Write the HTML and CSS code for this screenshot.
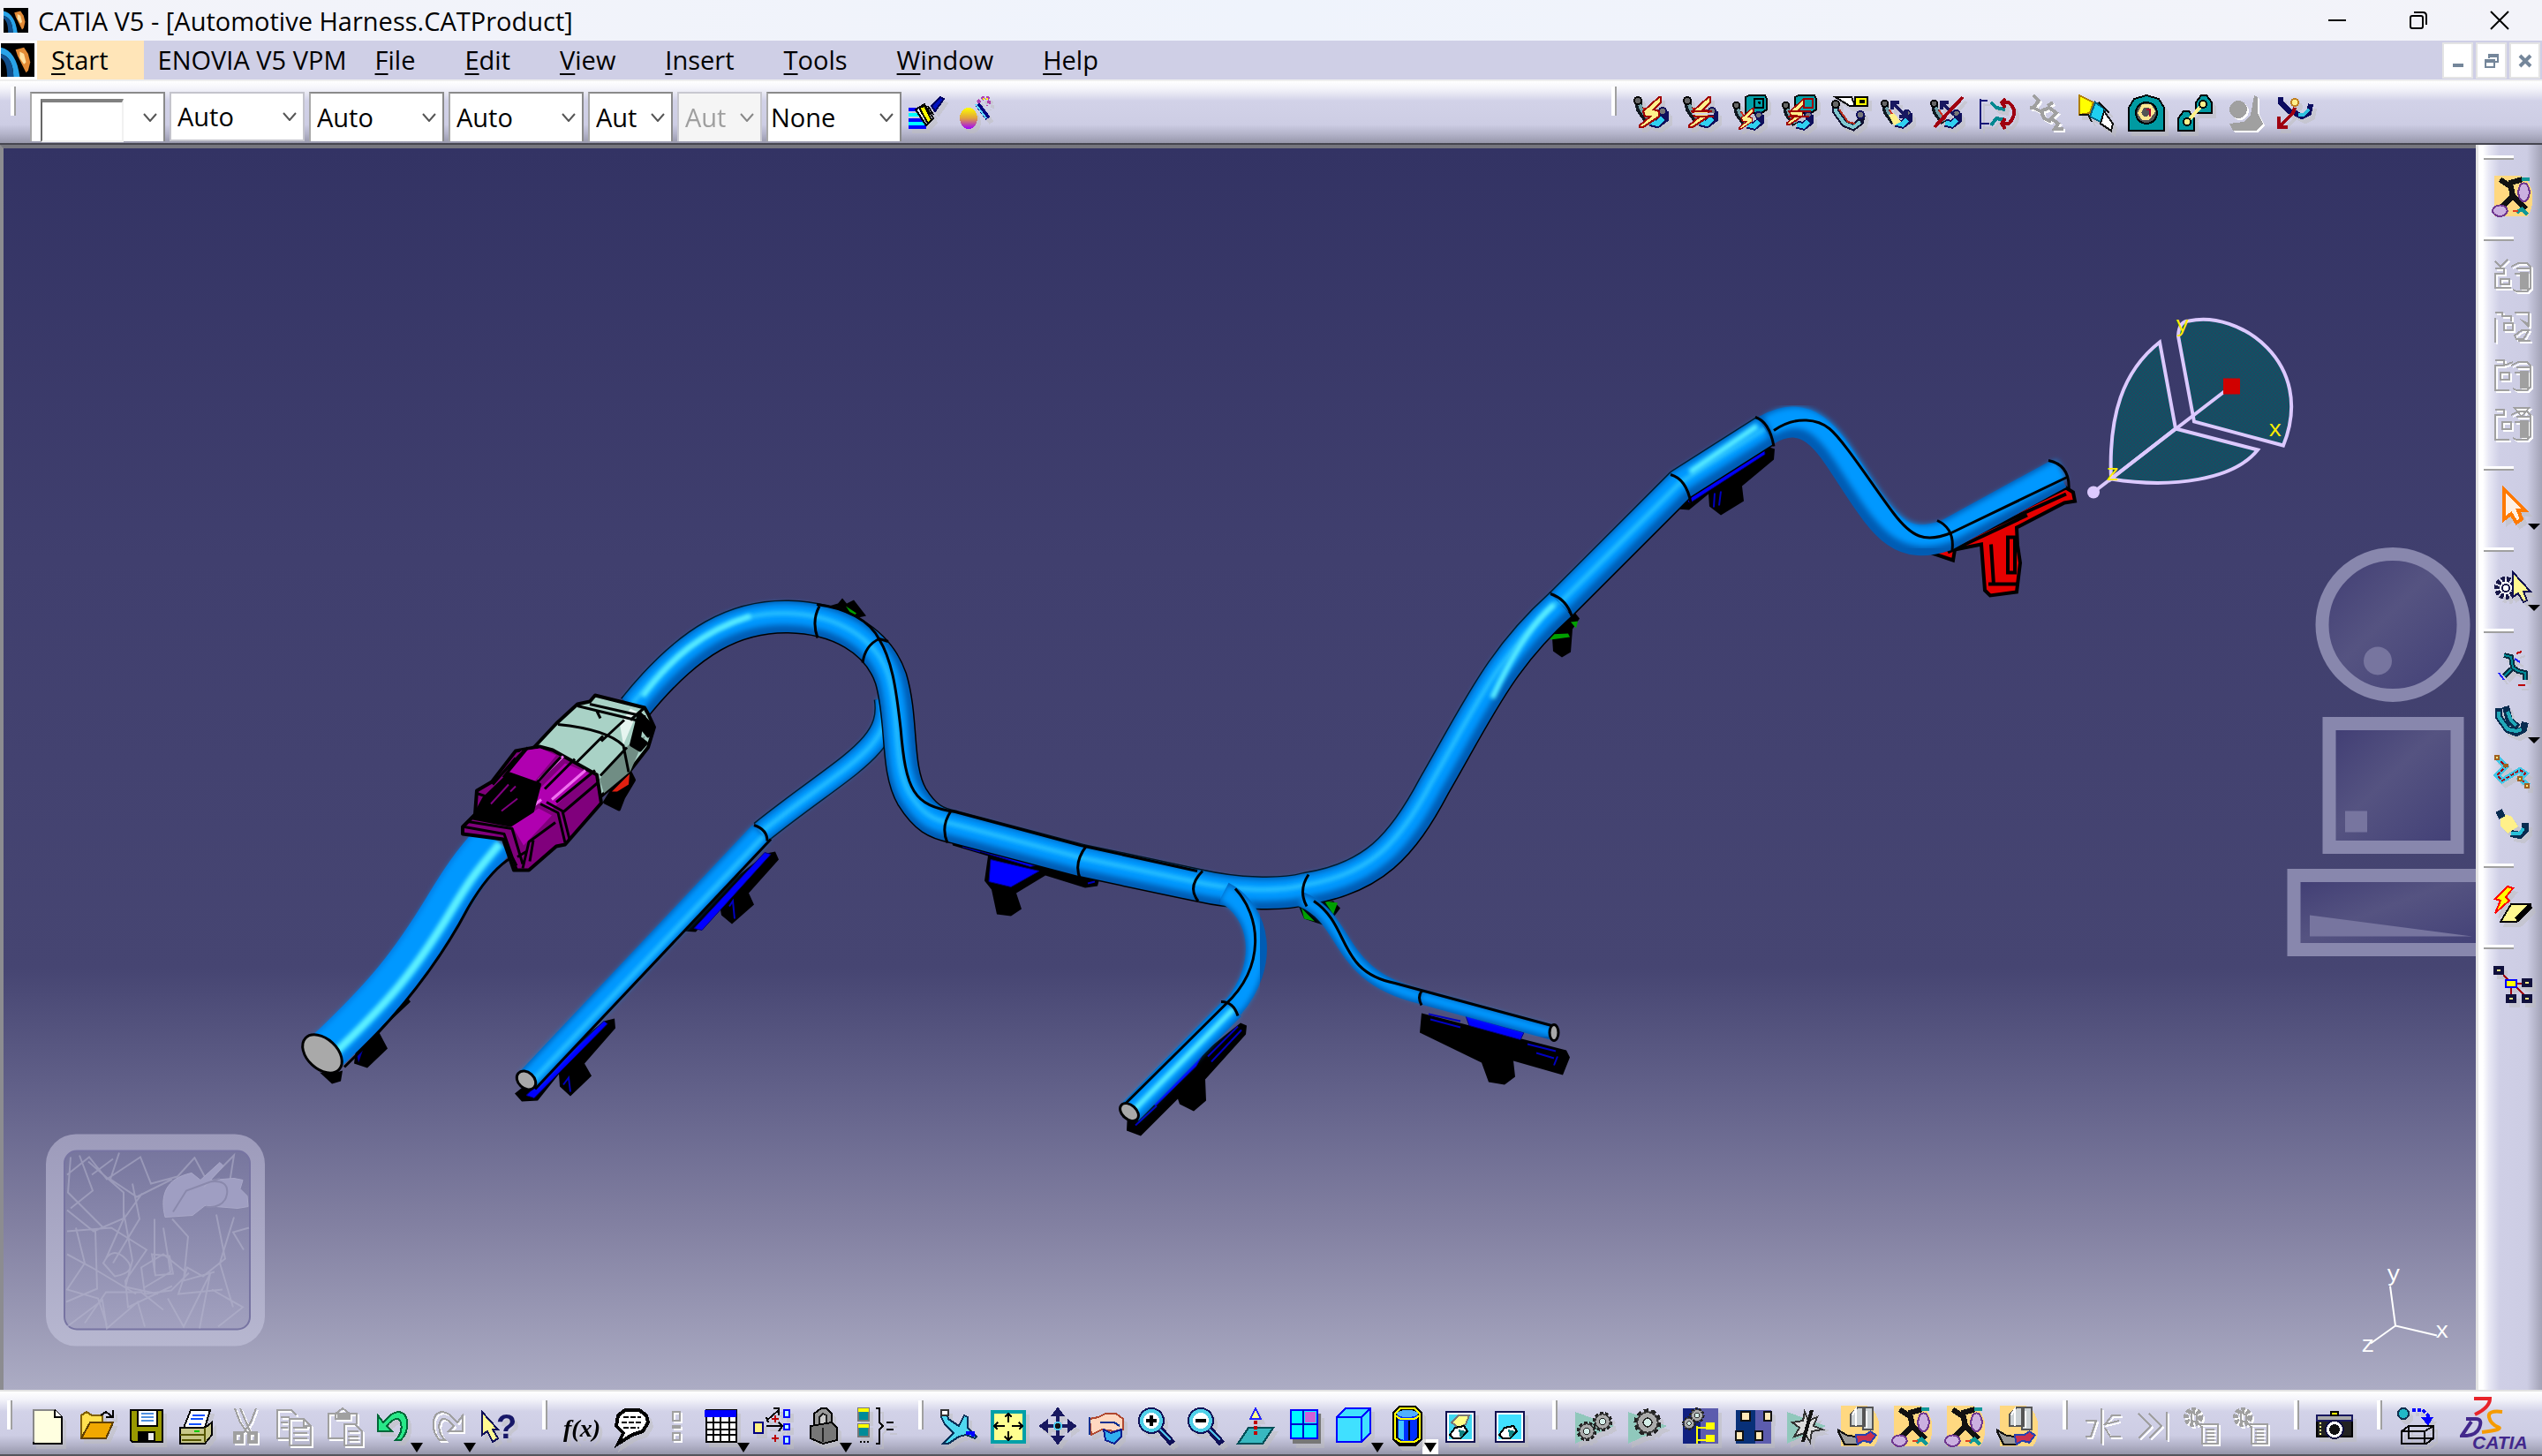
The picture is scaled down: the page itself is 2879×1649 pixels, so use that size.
FILE: index.html
```html
<!DOCTYPE html>
<html lang="en">
<head>
<meta charset="utf-8">
<title>CATIA V5 - [Automotive Harness.CATProduct]</title>
<link rel="stylesheet" href="styles.css">
</head>
<body>
<svg class="defs" aria-hidden="true">
  <defs>
    <symbol id="globe" viewBox="0 0 16 16"><rect width="16" height="16" fill="#000"/><path d="M0 2C5 3 8 8 9 16H6C6 10 4 6 0 5z" fill="#29a3e8"/><path d="M0 5c4 1 6 5 6 11H3C3 11 2 8 0 7z" fill="#124f8c"/><path d="M7 3l4-1 2 3 1 4-1 4-1 1-2-4-2-4z" fill="#e28a35"/><path d="M9 4l2 1 1 4-1 1-2-3z" fill="#ffe0a0"/></symbol>
    <symbol id="bundle" viewBox="0 0 22 22"><path d="M3 4l1 5 5 7" fill="none" stroke="#101820" stroke-width="4"/><path d="M4 6l1 3 4 6" fill="none" stroke="#6fa0a8" stroke-width="2"/><path d="M6 8l4 6" stroke="#d03020"/><path d="M10 16l4 1 4-3 0-4" fill="none" stroke="#10105c" stroke-width="5"/><path d="M10 16l4 1 3-3" fill="none" stroke="#30d0f0" stroke-width="3"/><circle cx="3" cy="4" r="2" fill="#666" stroke="#000"/><circle cx="17" cy="10" r="2" fill="#777" stroke="#10105c"/></symbol>
    <symbol id="bolt" viewBox="0 0 22 22"><path d="M15 2L6 10l1 3h3l-6 5v1h2l9-6v-3l-3-1 4-4V2z" fill="#fff08a" stroke="#a00000"/></symbol>
    <symbol id="harness" viewBox="0 0 24 24"><path d="M2 1h14c7 2 9 15 4 22H2z" fill="#ffd880"/><path d="M5 3l6 4 1 5-6 6M12 12l7 7M10 5l7-2" fill="none" stroke="#111" stroke-width="3"/><ellipse cx="18" cy="10" rx="3" ry="5" fill="#cbb0e0" stroke="#703890"/><ellipse cx="5" cy="20" rx="4" ry="3" fill="#cbb0e0" stroke="#703890"/><path d="M14 21l3-2 3 3M17 3h4" fill="none" stroke="#109898" stroke-width="2"/><path d="M12 20h3" stroke="#e04020"/></symbol>
    <symbol id="assembly" viewBox="0 0 24 24"><path d="M2 1h14c7 2 9 15 4 22H2z" fill="#ffd880"/><path d="M7 6l4-4h4v10H7zM14 2h5v12h-5z" fill="#ccd2d5" stroke="#555"/><path d="M8 6l2-3v9M16 4v9" stroke="#fff" fill="none"/><path d="M0 14l5 3 6 1v4H4z" fill="#999" stroke="#111"/><path d="M10 17h5l3-2 3 2-3 4-4-1-3 2z" fill="#c83050" stroke="#2840b0"/></symbol>
    <symbol id="cyl" viewBox="0 0 22 22"><path d="M10 5l4-2h5l2 2v12l-2 2h-6l-2-1M13 6h8M12 9h5" fill="none"/><path d="M15 8h5v10h-5z" class="solid"/></symbol>
    <symbol id="gear" viewBox="0 0 22 22"><circle cx="11" cy="11" r="8" fill="#888" stroke="#222" stroke-width="3" stroke-dasharray="3 2"/><circle cx="11" cy="11" r="7" fill="#aaa" stroke="#333"/><circle cx="11" cy="11" r="3" fill="#d4eee8" stroke="#222"/></symbol>
    <symbol id="gearlist" viewBox="0 0 22 22"><circle cx="6" cy="6" r="4" fill="none" stroke-width="3" stroke-dasharray="2 1"/><path d="M5 3l3 2v4L5 8zM8 8l3 4M9 10h11v11H11V11" fill="none"/><path d="M13 13h5M13 15h5M13 17h5M13 19h5" fill="none"/></symbol>
    <linearGradient id="panel" x1="0" y1="0" x2="1" y2="1"><stop offset="0" stop-color="#3f3c73"/><stop offset=".45" stop-color="#555381"/><stop offset="1" stop-color="#413f76"/></linearGradient>
    <linearGradient id="plate" x1="0" y1="0" x2="0" y2="1"><stop offset="0" stop-color="#9d9bbb"/><stop offset="1" stop-color="#b7b7d0"/></linearGradient>
    <linearGradient id="glass" x1="0" y1="0" x2="0" y2="1"><stop offset="0" stop-color="#77769e"/><stop offset="1" stop-color="#a2a1bf"/></linearGradient>
    <linearGradient id="ball" x1="0" y1="0" x2="0" y2="1"><stop offset="0" stop-color="#ffff00"/><stop offset=".5" stop-color="#e0a040"/><stop offset="1" stop-color="#a000ff"/></linearGradient>
    <pattern id="mesh" width="4" height="4" patternUnits="userSpaceOnUse"><rect width="4" height="4" fill="#0a5666"/><path d="M0 0h2v2H0zM2 2h2v2H2z" fill="#26425f"/></pattern>
    <filter id="soft"><feGaussianBlur stdDeviation="3"/></filter>
    <filter id="glow"><feGaussianBlur stdDeviation="2"/></filter>
    <path id="tubeA" d="M368 1192C436 1128 465 1092 505 1026C530 984 540 974 560 950"/>
    <path id="tubeB" d="M718 802C782 722 835 697 893 698C948 699 994 724 1009 768C1023 815 1014 870 1033 902C1048 926 1060 932 1080 936L1224 974L1356 1002C1400 1012 1450 1014 1480 1006C1555 994 1588 958 1624 890C1676 800 1700 745 1768 684"/>
    <path id="tubeC" d="M1003 790C1012 846 958 865 862 942"/>
    <path id="tubeC2" d="M862 943L598 1223"/>
    <path id="tubeD" d="M1386 1010C1428 1032 1438 1092 1396 1141"/>
    <path id="tubeD2" d="M1396 1141L1280 1259"/>
    <path id="tubeE" d="M1474 1018C1530 1042 1510 1104 1609 1128"/>
    <path id="tubeE2" d="M1609 1128L1759 1169"/>
    <path id="tubeF" d="M1768 684L1904 548L2000 487"/>
    <path id="tubeG" d="M2000 487C2050 458 2073 502 2098 540C2138 602 2155 622 2204 606L2332 536"/>
  </defs>
</svg>

<header class="titlebar">
  <svg class="app-icon"><use href="#globe"/></svg>
  <h1>CATIA V5 - [Automotive Harness.CATProduct]</h1>
  <div class="window-buttons">
    <button aria-label="Minimize"><svg viewBox="0 0 20 20"><path d="M0 10h20"/></svg></button>
    <button aria-label="Restore"><svg viewBox="0 0 20 20"><rect x="1" y="5" width="14" height="14" rx="2"/><path d="M5 1h10q4 0 4 4v10"/></svg></button>
    <button aria-label="Close"><svg viewBox="0 0 20 20"><path d="M0 0l20 20M20 0L0 20"/></svg></button>
  </div>
</header>

<nav class="menubar">
  <svg class="doc-icon"><use href="#globe"/></svg>
  <button class="active"><u>S</u>tart</button>
  <button class="tight">ENOVIA V5 VPM</button>
  <button><u>F</u>ile</button>
  <button><u>E</u>dit</button>
  <button><u>V</u>iew</button>
  <button><u>I</u>nsert</button>
  <button><u>T</u>ools</button>
  <button><u>W</u>indow</button>
  <button><u>H</u>elp</button>
  <div class="doc-buttons">
    <button aria-label="Minimize document"><svg viewBox="0 0 16 16"><path d="M2 13h12" stroke-width="4"/></svg></button>
    <button aria-label="Restore document"><svg viewBox="0 0 16 16"><path d="M5 5V1h10v8h-4M5 3h10M1 7h10v8H1zM1 9h10" stroke-width="2"/></svg></button>
    <button aria-label="Close document"><svg viewBox="0 0 16 16"><path d="M2 2l12 12M14 2L2 14" stroke-width="4"/></svg></button>
  </div>
</nav>

<div class="toolbar top" role="toolbar" aria-label="Graphic properties and electrical bundle">
  <i class="grip"></i>
  <div class="combos">
    <span class="combo swatch"><select aria-label="Fill colour"><option></option></select></span>
    <span class="combo flat"><select aria-label="Transparency"><option>Auto</option></select></span>
    <span class="combo"><select aria-label="Line weight"><option>Auto</option></select></span>
    <span class="combo"><select aria-label="Line type"><option>Auto</option></select></span>
    <span class="combo small"><select aria-label="Point symbol"><option>Aut</option></select></span>
    <span class="combo small off"><select aria-label="Rendering style" disabled><option>Aut</option></select></span>
    <span class="combo"><select aria-label="Layer"><option>None</option></select></span>
  </div>
  <button class="tool" aria-label="Painter"><svg viewBox="0 0 22 22"><path d="M0 9h9M0 15h12" stroke="#00f" stroke-width="2"/><path d="M0 12h11M0 17h10" stroke="#0ff" stroke-width="2"/><path d="M0 19h10" stroke="#00f" stroke-width="2"/><path d="M4 9l5-3 5 8-4 4z" fill="#fff" stroke="#000"/><path d="M6 8l3-1 4 8-2 2z" fill="#ff0" stroke="#000"/><path d="M11 7l3 5" stroke="#000"/><path d="M13 7l5-5 2 1-5 7z" fill="#0010c0" stroke="#000060"/></svg></button>
  <button class="tool" aria-label="Wizard"><svg viewBox="0 0 22 22"><ellipse cx="6" cy="14" rx="5" ry="6" fill="url(#ball)"/><path d="M11 6l6 8" stroke="#000080" stroke-width="3"/><path d="M10 6l6 8" stroke="#60d8ff"/><path d="M11 5l4-3 3 1-1 4" fill="none" stroke="#b040b0" stroke-dasharray="2 1" stroke-width="2"/><path d="M14 3h4" stroke="#ff0" stroke-dasharray="1 1"/></svg></button>
  <div class="right-tools">
    <i class="grip"></i>
    <button class="tool" aria-label="Create bundle"><svg viewBox="0 0 22 22"><use href="#bundle"/><use href="#bolt"/></svg></button>
    <button class="tool" aria-label="Modify bundle"><svg viewBox="0 0 22 22"><use href="#bundle"/><use href="#bolt"/><path d="M5 10h12M7 13h11" stroke="#a00000"/><path d="M6 11h12v1H6z" fill="#cfcfe6"/></svg></button>
    <button class="tool" aria-label="Create protected bundle"><svg viewBox="0 0 22 22"><path d="M8 2l2-1h9l1 2v6l-3 2H8z" fill="#00a0a8" stroke="#000"/><path d="M13 3h5v5h-5zM15 5h1v1" fill="none" stroke="#000"/><use href="#bundle" y="3" height="20" width="20"/><use href="#bolt" x="1" y="7" height="15" width="16"/></svg></button>
    <button class="tool" aria-label="Modify protected bundle"><svg viewBox="0 0 22 22"><path d="M8 2l2-1h9l1 2v6l-3 2H8z" fill="#00a0a8" stroke="#000"/><path d="M13 3h5v5h-5z" fill="none" stroke="#a00000"/><use href="#bundle" y="3" height="20" width="20"/><use href="#bolt" y="1" height="20" width="18"/><path d="M4 10h13M4 13h12" stroke="#a00000"/></svg></button>
    <button class="tool" aria-label="Measure bundle"><svg viewBox="0 0 22 22"><path d="M3 6v4l5 7 5 2 4-3 1-4" fill="none" stroke="#101030" stroke-width="4"/><path d="M3 6v4l5 7 5 2 4-3" fill="none" stroke="#7fc8d0" stroke-width="2"/><path d="M5 9l5 7 4 1" fill="none" stroke="#b83020"/><circle cx="3" cy="6" r="2" fill="#666" stroke="#000"/><circle cx="17" cy="12" r="2" fill="#777" stroke="#10105c"/><path d="M3 2h9l2 5-3 0z" fill="#fff" stroke="#000"/><path d="M14 2h7v5h-7z" fill="#ff0" stroke="#000" stroke-width="1"/><path d="M17 4h2v1h-2z" stroke="#000"/></svg></button>
    <button class="tool" aria-label="Flatten"><svg viewBox="0 0 22 22"><use href="#bundle" y="2" height="20" width="20"/><path d="M5 12l3-1 4 5-4 2z" fill="#fff08a"/><path d="M8 6l6 6M7 9V5h4M15 9v4h-4" fill="none" stroke="#181860" stroke-width="2"/></svg></button>
    <button class="tool" aria-label="Remove link"><svg viewBox="0 0 22 22"><use href="#bundle" y="2" height="20" width="20"/><path d="M8 6l6 6M7 9V5h4" fill="none" stroke="#181860" stroke-width="2"/><path d="M19 2L3 19" stroke="#a00010" stroke-width="2"/></svg></button>
    <button class="tool" aria-label="Swap"><svg viewBox="0 0 22 22"><path d="M1 3v17M1 4h4M1 17h5" fill="none" stroke="#181878" stroke-width="1"/><path d="M7 5l3 3 5 1M7 18l3-4 5 1" fill="none" stroke="#008890" stroke-width="2"/><path d="M13 5h4c4 3 4 8 0 12h-4M15 3l-2 2 2 3M15 14l-2 3 2 3" fill="none" stroke="#a00010" stroke-width="2"/></svg></button>
    <button class="tool off" disabled aria-label="Route"><svg viewBox="0 0 22 22"><path d="M3 1l3 3-3 4 4 2 5-2 4 3-3 3 4 3-2 3h5M7 9l2 5 4 2M1 8h3M11 7l3-2" fill="none" stroke-width="2"/></svg></button>
    <button class="tool" aria-label="Connector"><svg viewBox="0 0 22 22"><path d="M1 1l8 4-2 6-6 1z" fill="#ff0" stroke="#b08000"/><path d="M10 5l6 4-3 7-6-3z" fill="#20d0f0" stroke="#006080"/><path d="M15 10l5 7-1 4-6-4z" fill="#fff" stroke="#111"/><path d="M1 12h5l2 4M12 5l6 6" stroke="#111" fill="none"/></svg></button>
    <button class="tool" aria-label="Support"><svg viewBox="0 0 22 22"><path d="M1 21V8l3-5 7-2 7 2 3 5v13z" fill="#009aa2" stroke="#000"/><circle cx="11" cy="11" r="6" fill="#555" stroke="#000"/><path d="M9 7h4l2 3-3 4H9L7 11z" fill="none" stroke="#ffe890" stroke-width="2"/><path d="M11 9h2v4" fill="none" stroke="#b00030"/></svg></button>
    <button class="tool" aria-label="Link supports"><svg viewBox="0 0 22 22"><path d="M11 11V5l3-4h3l3 4v6zM1 21v-7l3-4h3l3 4v7z" fill="#009aa2" stroke="#000"/><path d="M6 16L15 6" stroke="#fff08a" stroke-width="2"/><circle cx="15" cy="6" r="2" fill="#fff08a" stroke="#000"/><circle cx="6" cy="16" r="2" fill="#fff08a" stroke="#000"/></svg></button>
    <button class="tool off" disabled aria-label="Clamp"><svg viewBox="0 0 22 22"><g class="solid"><circle cx="7" cy="9" r="5"/><path d="M16 1l2 1v9l3 6-4 4H4l-2-4 8-1 4-4z"/></g></svg></button>
    <button class="tool" aria-label="Follow curve"><svg viewBox="0 0 22 22"><path d="M3 2v3l5 5 4 1M20 6l-1 5-4 2-4-2" fill="none" stroke="#0b0b60" stroke-width="3"/><path d="M13 12l3 0 3-3" fill="none" stroke="#30c0e0" stroke-width="2"/><circle cx="11" cy="5" r="2" fill="#fff08a" stroke="#c08020"/><path d="M11 8l-1 3-7 7M2 13v6h5" fill="none" stroke="#a00010" stroke-width="2"/></svg></button>
  </div>
</div>

<main class="work">
  <section class="viewport" aria-label="3D view">
    <svg class="scene" viewBox="4 168 2800 1405" preserveAspectRatio="xMidYMid meet">
      <!-- mounting clips under the harness -->
      <g class="clip">
        <path class="k" d="M462 1130l3 4-36 34 10 19-23 22-15-5 2-16-20 16-3 14-14-3 30-40z"/><path d="M404 1192l8-6-6 17z" fill="#0000a8"/>
        <path class="k" d="M868 966l10-2 4 9-34 38 6 13-25 22-12-10-2-12-27 31-16-1-6-8z"/><path class="b" d="M866 965l7 2-78 86-9-2z"/><path class="r" d="M826 1026l4-6 2 20"/>
        <path class="k" d="M684 1156l12-3 1 11-35 40 8 14-24 23-12-11-1-14-24 30-18 1-8-9z"/><path class="b" d="M684 1156l4 3-83 84-9-3z"/><path class="r" d="M638 1228l6-8 2 16"/>
        <path class="k" d="M1078 952l168 40-3 11-14 2-45-14-33 20 6 18-12 8-16-2-6-28-8-10 4-28-40-12z"/><path class="b" d="M1122 973l55 13-32 18-25-6zM1105 958l70 21-8 2-60-18z"/><path class="r" d="M1232 1000l8-2M1090 958l20 6"/>
        <path class="k" d="M1405 1158l7 3-1 10-46 51 1 24-14 12-16-8-2-6-42 42-16-6 1-20z"/><path class="b" d="M1364 1190l-9 17-46 45-5-4z"/><path class="r" d="M1402 1162l-34 34M1406 1166l-34 36M1310 1252l-24 22M1300 1248l-20 20"/>
        <path class="k" d="M1610 1147l164 42 4 8-8 20-56-16 2 18-12 9-18-3-8-22-70-34z"/><path class="b" d="M1660 1150l66 19-4 8-58-16z"/><path class="r" d="M1618 1148l36 8M1620 1154l34 9M1730 1182l32 8M1764 1196l-4 10M1740 1192l20 6"/>
        <path class="k" d="M1998 504l12 4-1 12-36 30 2 17-26 16-13-10-1-14-22 18-13-1 2-14z"/><path class="b" d="M1998 508l1 6-85 55-4-3z"/><path class="r" d="M1942 558l-1 16M1949 556l-2 16"/>
        <path d="M2188 626l152-74 8 5 2 10-12 2-54 28 1 20 3 20-4 33-30 4-6-6-4-52-30 6-2 12z" fill="#e60000" stroke="#000" stroke-width="4"/><path d="M2200 622l140-63M2274 608l8 0v40l-8 0zM2255 616l3 46M2252 661h34M2206 625l90-42" fill="none" stroke="#000" stroke-width="4"/>
        <path class="k" d="M1755 705l26-15 8 10-8 12-2 26-10 6-10-7-1-15-8-6z"/><path class="g" d="M1754 718l22-1 2 4-22 3zM1779 704l8-1-2 8z"/>
        <path class="k" d="M1470 1024l40-4 8 8-9 12-8 8-24-8z"/><path class="g" d="M1474 1028l15 15-12-3zM1500 1020l15 2-5 13z"/>
        <path class="k" d="M935 687l14-4 5-6 5 6 8-4 14 18-18 4z"/><path class="g" d="M958 686l12 8-4 4z"/>
      </g>
      <!-- cable segments: outline, shaded side, body, highlight -->
      <g class="tube w24"><use class="o" href="#tubeC"/><use class="d" href="#tubeC"/><use class="m" href="#tubeC"/><use class="h" href="#tubeC"/></g>
      <g class="tube w28"><use class="d" href="#tubeC2"/><use class="m" href="#tubeC2"/><use class="h" href="#tubeC2" transform="translate(3 3)"/></g>
      <g class="tube w34"><use class="o" href="#tubeB"/><use class="d" href="#tubeB"/><use class="m" href="#tubeB" transform="translate(-2 -3)"/><use class="h" href="#tubeB" transform="translate(-3 -4)"/></g>
      <g class="tube w34"><use class="o" href="#tubeF"/><use class="d" href="#tubeF"/><use class="m" href="#tubeF" transform="translate(-2 -3)"/><use class="h" href="#tubeF" transform="translate(-1 -2)"/></g>
      <g class="tube w34"><use class="d" href="#tubeG"/><use class="m" href="#tubeG" transform="translate(3 -5)"/></g>
      <g class="tube w24"><use class="d" href="#tubeD"/><use class="m" href="#tubeD"/></g>
      <g class="tube w28 bright"><use class="d" href="#tubeD2"/><use class="m" href="#tubeD2"/><use class="h" href="#tubeD2" transform="translate(1 1)"/></g>
      <g class="tube w18"><use class="d" href="#tubeE"/><use class="m" href="#tubeE"/><use class="d" href="#tubeE2"/><use class="m" href="#tubeE2"/></g>
      <g class="tube w46 bright"><use class="d" href="#tubeA"/><use class="m" href="#tubeA" transform="translate(-2 -2)"/><use class="h" href="#tubeA" transform="translate(6 5)"/></g>
      <g class="tube bright"><path class="h" d="M728 788C760 745 795 715 850 697M1690 790C1712 742 1735 706 1760 684M1914 534L1990 482"/></g>
      <g class="line">
        <path d="M390 1208C455 1146 500 1085 530 1028Q555 985 579 971"/>
        <path d="M873 950L606 1233"/>
        <path d="M925 684C958 688 985 702 996 724C1012 750 1016 790 1020 824C1026 895 1034 912 1082 919L1224 957L1356 986"/>
        <path d="M928 686q-9 17-2 36M977 750q3-20 19-27l10 3M854 934q15 5 15 18M1077 918q-12 18-4 36M1230 958q-15 20-6 38M1362 986q-18 18-5 34M1482 990q-12 18-2 36"/>
        <path d="M1756 672q18 6 24 25M1892 537q18 5 23 32M1988 472q16 5 21 33M2194 589q20 9 17 34M2320 521q25 5 23 34"/>
        <path d="M2009 487C2035 469 2060 475 2072 485C2088 498 2120 548 2144 580C2165 608 2180 615 2210 603L2341 540"/>
        <path d="M1399 1006C1428 1037 1434 1094 1388 1137L1271 1253M1383 1134q14 0 19 16"/>
        <path d="M1488 1020C1530 1048 1514 1100 1580 1113L1761 1162M1610 1122q-5 7 0 16"/>
      </g>
      <g fill="#a9a9a9" stroke="#000" stroke-width="3"><ellipse cx="365" cy="1193" rx="26" ry="17" transform="rotate(43 365 1193)"/><ellipse cx="596" cy="1223" rx="12" ry="9" transform="rotate(42 596 1223)"/><ellipse cx="1279" cy="1259" rx="12" ry="8" transform="rotate(42 1279 1259)"/><ellipse cx="1760" cy="1169" rx="5" ry="9"/></g>
      <path d="M362 1214l12 2 14-4-2 12-10 3z"/>
      <!-- two part connector -->
      <g stroke="#000" stroke-width="4" stroke-linejoin="round">
        <path d="M696 890l18-15 4 8-12 20-5 13-16-8z" fill="#000"/><path d="M713 876l-1 12-13 8-6 0z" fill="#e02010" stroke="none"/>
        <path d="M674 787l56 14 4 7 7 15-7 23-21 27-32 28-80-51 29-31 24-22 14-3z" fill="#a9d2c6"/>
        <path d="M712 843l19-10-17 40-30 25-5-16z" fill="#708d84" stroke="none"/>
        <path d="M702 820l12-18 8 4-16 37z" fill="#e6f5f0" stroke="none"/>
        <path d="M668 797l62 14-2 14-8-10-66-16M632 820c40 4 62 12 74 24l6 30M707 815l-26 24M683 833l-32 32M710 846l-30 32M730 801l-16 14M676 805l4 8" fill="none" stroke-width="3"/><path d="M724 807l16 16-6 10-8-10-2 12 8 6-7 8-10-6z" fill="#000"/>
        <path d="M584 850l27-5 15 4 50 28 5 32-41 47-10 2-31 27h-17l-12-35-46-6v-8l14-14 2-27 17-10z" fill="#80007c"/>
        <path d="M590 850l22-3 18 8-25 30-32-6zM640 864l28 12-45 42-22-15zM580 935l30-20 15 8-32 34z" fill="#b000b0" stroke="none"/>
        <path d="M610 883l28-27M625 905l38-33M581 931l32-26" stroke="#f070f0" stroke-width="3"/>
        <path d="M577 876l34 12-8 30-25 16-42-8 12-22z" fill="#000"/>
        <path d="M563 882l30-32M570 880l28-34M558 888l26-30M607 887l28-30M617 893l34-34M630 908l44-36M637 920l40-34M612 910l20 10 8 34M619 908l18 10 8 32M540 898l18 6M526 936l45 8 14 40M530 930l50 8 12 40M592 983l7-30 30-22M586 970l10-6M575 960l10 20M600 975l4-24" fill="none" stroke-width="3"/>
        <path d="M556 910l20-22M578 896l6-6M568 918l18-14" stroke="#800080" stroke-width="2"/>
      </g>
      <!-- compass -->
      <g fill="url(#mesh)" stroke="#dcc9ff" stroke-width="4"><path d="M2485 477l-18-97q1-17 12-17C2535 350 2624 410 2586 504z"/><path d="M2446 387l18 98-73 57C2388 470 2404 420 2446 387z"/><path d="M2464 485l93 24C2530 543 2460 553 2391 542z"/><path d="M2371 557L2527 437"/></g>
      <circle cx="2371" cy="557" r="7" fill="#dcc9ff"/><rect x="2518" y="428" width="19" height="18" fill="#d00000"/>
      <g class="axis yellow"><text x="2464" y="375">y</text><text x="2569" y="493">x</text><text x="2385" y="543">z</text></g>
      <!-- view controls -->
      <g fill="url(#panel)" stroke="#8887ad" stroke-width="15"><circle cx="2710" cy="707" r="80"/><rect x="2638" y="819" width="145" height="140"/><path d="M2820 991H2598v84h222"/></g>
      <g fill="#77759f"><circle cx="2693" cy="748" r="16"/><path d="M2656 918h25v24h-25zM2616 1036v24h184z"/></g>
      <!-- inactive magnifier plate -->
      <rect x="52" y="1284" width="248" height="240" rx="34" fill="url(#plate)"/><rect x="73" y="1303" width="210" height="202" rx="14" fill="url(#glass)" stroke="#7774a2" stroke-width="2"/>
      <path class="cracks" d="M76 1330l25-20 20 25 38-25 12 30 30-8 20-22M90 1308l15 40-25 20M100 1315l40 35 0 30-20 45M76 1370l30 24 35-15 20-28M135 1305l-10 30 30 20 40-20M76 1394l50-4 40 25-24 35 3 30 50-24M86 1390l10 40-20 30 35 10 10 30M108 1394l2 65-35 15M140 1372l10 55-8 30 37 8M185 1390l8 50-30 18M175 1380l0 60M80 1310l-3 40 40 40M245 1375l10 50-25 20-18-10-10 30 50-5M265 1378l-16 52 15 50M282 1390l-18 5 12 20M190 1470l18 32 30-60-12 62M76 1502l40-30 5 32 35-30 8 28M240 1460l35 20-28 22M96 1498l24-35 40 0 25 20M195 1380l18 20-5 50 35-10M76 1420l28 15 50 30M104 1330l24-18M150 1340l8 40-30 50M220 1310l15 28 30-30-8 50M210 1440l-25-20-25 15 4 30 30-4 20-20M117 1430q10-20 25-5t-12 20zM172 1420l20 2 4 20-20 2z"/>
      <path d="M187 1378c-6-24 0-44 30-50l10 8 22-20 4 4-22 24 8-8 26-2 10 2-3 10 8 8 1 12-12 2-37-3-14 11z" fill="#9f9ec2" stroke="#a9a8c8"/><path d="M237 1338c14-2 22 2 20 14s-14 16-24 14M196 1372l15-24 38-14" fill="none" stroke="#8a89ac" stroke-width="2"/>
      <!-- reference axes -->
      <path d="M2707 1456l6 45 47 11M2713 1501l-28 20" fill="none" stroke="#fff" stroke-width="2"/>
      <g class="axis"><text x="2703" y="1450">y</text><text x="2758" y="1514">x</text><text x="2674" y="1530">z</text></g>
    </svg>
  </section>

  <aside class="sidebar" role="toolbar" aria-label="Workbench tools">
    <i class="bar"></i>
    <button class="tool big" aria-label="Workbench"><svg><use href="#harness"/></svg></button>
    <i class="bar"></i>
    <button class="tool off" disabled aria-label="Insert part"><svg viewBox="0 0 22 22"><use href="#cyl"/><path d="M1 2l3 3 4-4M1 6h5v3H1v8h9M4 12h5v3H4z" fill="none"/></svg></button>
    <button class="tool off" disabled aria-label="Replace part"><svg viewBox="0 0 22 22"><path d="M1 3h4v2h5v3M1 6v14M6 9h5v4H6zM12 3h8v8M12 16l4-3h4l-3 5h-4zM14 19h7" fill="none"/><path d="M14 6l6 3v3z" class="solid"/></svg></button>
    <button class="tool off" disabled aria-label="Insert assembly"><svg viewBox="0 0 22 22"><use href="#cyl"/><path d="M1 2h5v3H1v14h8M6 5l5-2M4 9h5v4H4z" fill="none"/></svg></button>
    <button class="tool off" disabled aria-label="Insert component"><svg viewBox="0 0 22 22"><use href="#cyl"/><path d="M1 2h5v3H1v14h8M5 9h5v4H5zM12 1h8l-4 5z" fill="none"/></svg></button>
    <i class="bar"></i>
    <button class="tool more" aria-label="Select"><svg viewBox="0 0 22 22"><path d="M6 1v17l4-3 3 5 3-2-2-5h4z" fill="#fff0e4" stroke="#ff7a00" stroke-width="2"/></svg></button>
    <i class="bar"></i>
    <button class="tool more" aria-label="Geometry selection"><svg viewBox="0 0 22 22"><circle cx="7" cy="11" r="5" fill="#fff" stroke="#181848" stroke-width="3" stroke-dasharray="2 1"/><circle cx="7" cy="11" r="2" fill="none" stroke="#181848"/><path d="M11 2v14l3-2 3 5 2-1-2-5h4z" fill="#fff890" stroke="#101050"/></svg></button>
    <i class="bar"></i>
    <div class="stack">
      <button class="tool" aria-label="Bundle segment"><svg viewBox="0 0 22 22"><path d="M6 3l4 1 1 6 3 2 4 1v4M10 11l-4 4" fill="none" stroke="#0a2c40" stroke-width="3"/><path d="M6 3l4 1 1 6 3 2 4 1v4M10 11l-4 4" fill="none" stroke="#008c98"/><path d="M3 13l3 4M12 5l3 2" stroke="#22f"/><path d="M13 2l3-1M14 20h4" stroke="#b00"/></svg></button>
      <button class="tool more" aria-label="Multi branchable"><svg viewBox="0 0 22 22"><path d="M3 4v5l5 7 5 2 4-2 1-4M7 3l2 8 5 4" fill="none" stroke="#082c50" stroke-width="4"/><path d="M3 6v3l5 7 5 1 3-1M8 6l2 5 3 3" fill="none" stroke="#20a8b8" stroke-width="2"/></svg></button>
      <button class="tool" aria-label="Spline"><svg viewBox="0 0 22 22"><path d="M2 3l5 5-5 5 3 3 10-6 3 2-3 3 5 4" fill="none" stroke="#40c8e8" stroke-width="3"/><path d="M2 3l5 5-5 5 3 3 10-6 3 2-3 3 5 4" fill="none" stroke="#a00010" stroke-dasharray="2 1"/><path d="M1 2h2v2H1zM6 7h2v1H6zM14 14h2v2h-2zM18 18h2v2h-2z" fill="#fff080" stroke="#a06020"/></svg></button>
      <button class="tool" aria-label="Attach bundle"><svg viewBox="0 0 22 22"><path d="M4 6l6 1 4 6-6 4-4-4z" fill="#fff08a"/><path d="M3 4l2 4M10 17l5 1 3-3v-4" fill="none" stroke="#082c50" stroke-width="4"/><path d="M10 17h5l2-3" fill="none" stroke="#28c0d8" stroke-width="2"/></svg></button>
    </div>
    <i class="bar"></i>
    <button class="tool" aria-label="Update"><svg viewBox="0 0 22 22"><path d="M8 1L1 8l3 1-3 7 8-7-2-2 4-5z" fill="#ff0" stroke="#f00"/><path d="M10 11h11v2l-8 8H4z" fill="#fff890" stroke="#000"/><path d="M13 20l8-8" stroke="#000" stroke-width="3"/></svg></button>
    <i class="bar"></i>
    <button class="tool" aria-label="Network"><svg viewBox="0 0 22 22"><path d="M4 3l6 7h8M10 10v8M12 11l6 6" fill="none" stroke="#a00010"/><path d="M1 1h4v3H1zM17 8h4v3h-4zM8 17h4v3H8zM17 17h4v3h-4z" fill="#fff080" stroke="#10103c" stroke-width="2"/><path d="M7 8h6v4H7z" fill="#ff0" stroke="#00f" stroke-width="1"/></svg></button>
  </aside>
</main>

<footer class="toolbar bottom" role="toolbar" aria-label="Standard, view and knowledge tools">
  <i class="grip"></i>
  <div class="group">
    <button class="tool" aria-label="New"><svg viewBox="0 0 22 22"><path d="M3 2h12l4 4v15H3z" fill="#ffffe0" stroke="#000"/><path d="M3 20V2h12" fill="none" stroke="#888"/><path d="M15 2v4h4" fill="#fff" stroke="#000"/></svg></button>
    <button class="tool" aria-label="Open"><svg viewBox="0 0 22 22"><path d="M2 18V5l3-2 3 2h6v4" fill="#ffe050" stroke="#806000"/><path d="M2 18l5-9h13l-4 9z" fill="#f0a800" stroke="#604000"/><path d="M13 5l3-2 4 3M20 2v4h-4" fill="none" stroke="#000"/></svg></button>
    <button class="tool" aria-label="Save"><svg viewBox="0 0 22 22"><path d="M2 2h18v18H3l-1-1z" fill="#999900" stroke="#000"/><path d="M6 2h11v9H6z" fill="#fff" stroke="#000"/><path d="M8 4h7M8 6h7M8 8h7" stroke="#5090e0"/><path d="M6 14h10v6H6z" fill="#000"/><path d="M12 15h3v4h-3z" fill="#eee"/></svg></button>
    <button class="tool" aria-label="Print"><svg viewBox="0 0 22 22"><path d="M8 2h11l-3 10H4z" fill="#fff" stroke="#000"/><path d="M9 5h7M8 7h7M7 10h7" stroke="#1050ff"/><path d="M2 12h14l4-3v7l-4 5H2z" fill="#c8c888" stroke="#000"/><path d="M2 16h14M16 12v8M3 19h11" stroke="#555500"/><path d="M10 14h3" stroke="#0c0"/></svg></button>
    <button class="tool off" disabled aria-label="Cut"><svg viewBox="0 0 22 22"><path d="M5 1l3 8 5 7M17 1l-3 8-5 7M8 1l6 14" fill="none"/><path d="M5 15h4v5H5zM13 15h4v5h-4z" fill="none" stroke-width="2"/></svg></button>
    <button class="tool off" disabled aria-label="Copy"><svg viewBox="0 0 22 22"><path d="M8 18H1V2h8l3 3M8 7h8l4 4v11H8zM16 7v4h4M3 6h5M3 9h4M3 12h4M10 12h8M10 15h8M10 18h8" fill="none"/></svg></button>
    <button class="tool off" disabled aria-label="Paste"><svg viewBox="0 0 22 22"><path d="M11 18H2V4h16v6M6 4l4-3 4 3v3H6zM11 10h6l4 4v8H11zM13 14h6M13 17h6M13 19h6" fill="none"/><path d="M7 4h7v3H7z" class="solid"/></svg></button>
    <button class="tool more" aria-label="Undo"><svg viewBox="0 0 22 22"><path d="M2 5v9h8l-3-3c4-5 7-5 8-2 1 4 0 7-3 10h3c5-5 5-15-1-16-4 0-6 3-9 6z" fill="#28e888" stroke="#006838"/></svg></button>
    <button class="tool more off" disabled aria-label="Redo"><svg viewBox="0 0 22 22"><path d="M20 5v9h-8l3-3c-4-5-7-5-8-2-1 4 0 7 3 10H7C2 14 2 4 8 3c4 0 6 3 9 6z" fill="none"/></svg></button>
    <button class="tool" aria-label="What's this"><svg viewBox="0 0 22 22"><path d="M1 3v13l3-2 3 6 3-2-3-5h3z" fill="#fff890" stroke="#101058"/><text x="9" y="18" class="glyph help">?</text></svg></button>
  </div>
  <i class="grip"></i>
  <div class="group">
    <button class="tool" aria-label="Formula"><svg viewBox="0 0 22 22"><text x="0" y="17" class="glyph fx">f(x)</text></svg></button>
    <button class="tool" aria-label="Comment"><svg viewBox="0 0 22 22"><path d="M7 2h8l4 3 1 4-3 5-6 2-8 5 3-6-4-4 1-6z" fill="#fff" stroke="#000" stroke-width="2"/><path d="M6 6h10M5 9h12M6 12h9" stroke="#000" stroke-dasharray="3 1"/></svg></button>
    <button class="tool narrow off" disabled aria-label="Lock state"><svg viewBox="0 0 22 22"><path d="M9 3h4v5H9zM9 11h4v1H9zM9 15h4v4H9z" fill="none"/></svg></button>
    <button class="tool more" aria-label="Design table"><svg viewBox="0 0 22 22"><path d="M3 2h17v18H3z" fill="#fff" stroke="#000"/><path d="M3 9h17M3 13h17M3 16h17M7 5v15M11 5v15M16 5v15" stroke="#000"/><path d="M2 2h18v4H2z" fill="#00f"/></svg></button>
    <button class="tool" aria-label="Relations"><svg viewBox="0 0 22 22"><path d="M0 9h5v6H0z" fill="#fff080" stroke="#000080"/><path d="M17 2h3v4h-3zM17 10h3v3h-3zM17 17h3v4h-3z" fill="#bff" stroke="#00f" stroke-width="1"/><path d="M7 8l7-6M7 11h9M11 1h3v4M8 9l-1-3M14 9l2 2-2 3" fill="none" stroke="#000"/><path d="M12 5v4M10 7h4M12 16v4M10 18h4" stroke="#b00"/></svg></button>
    <button class="tool more" aria-label="Lock"><svg viewBox="0 0 22 22"><path d="M6 11V4l4-3h3l3 3v7" fill="#999" stroke="#000"/><path d="M9 11V6l2-2 2 1v6z" fill="#ccc" stroke="#222"/><path d="M4 11l12-2 3 3v7l-8 2-7-3z" fill="#777" stroke="#000"/><path d="M11 12v8" stroke="#222"/></svg></button>
    <button class="tool" aria-label="Equivalent dimensions"><svg viewBox="0 0 22 22"><path d="M1 1h6v7H1zM1 10h6v7H1z" fill="#008b98" stroke="#777"/><path d="M1 2h6M1 11h6" stroke="#ff0" stroke-width="2"/><path d="M2 20h6" stroke="#000" stroke-dasharray="1 1"/><path d="M11 1h2v8l2 2-2 2v8h-2M17 9h4M17 13h4" fill="none" stroke="#000"/></svg></button>
  </div>
  <i class="grip"></i>
  <div class="group">
    <button class="tool" aria-label="Fly mode"><svg viewBox="0 0 22 22"><path d="M1 3l3 0 1 4 6 4 3-6 2 1 0 6 5 5-1 1-5-2-4 1-6 4H2l6-6-5-5-2-4z" fill="#50d8f0" stroke="#083058"/><path d="M1 2h4v3H1z" fill="#fff" stroke="#333"/><path d="M15 15h4v2" stroke="#00f" fill="none" stroke-width="2"/></svg></button>
    <button class="tool" aria-label="Fit all in"><svg viewBox="0 0 22 22"><path d="M2 3h18v17H2z" fill="#ffff90" stroke="#00a0a8" stroke-width="2"/><path d="M11 4v5M11 14v5M4 11h5M13 11h5M9 6l2-2 2 2M9 17l2 2 2-2M5 9l-2 2 2 2M17 9l2 2-2 2" fill="none" stroke="#000" stroke-width="1"/></svg></button>
    <button class="tool" aria-label="Pan"><svg viewBox="0 0 22 22"><g stroke="#181860" fill="#181860"><path d="M11 3v17M3 11h17" stroke-width="2"/><path d="M11 1l3 4H8zM11 21l3-4H8zM1 11l4-3v6zM21 11l-4-3v6z"/></g><circle cx="11" cy="11" r="2" fill="#111" stroke="#48c8f0"/></svg></button>
    <button class="tool" aria-label="Rotate"><svg viewBox="0 0 22 22"><path d="M1 7l5-1 4-2h6l4 3v6l-5 1-7-1-6 3z" fill="#ffd8c0" stroke="#b04830"/><path d="M1 6v10M7 9h8l3 2" fill="none" stroke="#083090"/><path d="M9 13l4 2 6-2v4l-4 4-5-2z" fill="#30b0f0" stroke="#102090"/></svg></button>
    <button class="tool" aria-label="Zoom in"><svg viewBox="0 0 22 22"><circle cx="8" cy="8" r="6" fill="#fff" stroke="#50d0e8" stroke-width="3"/><circle cx="8" cy="8" r="7" fill="none" stroke="#101058"/><path d="M13 13l7 8" stroke="#101058" stroke-width="4"/><path d="M13 13l6 6" stroke="#50c0e8"/><path d="M5 8h6M8 5v6" stroke="#000" stroke-width="2"/></svg></button>
    <button class="tool" aria-label="Zoom out"><svg viewBox="0 0 22 22"><circle cx="8" cy="8" r="6" fill="#fff" stroke="#50d0e8" stroke-width="3"/><circle cx="8" cy="8" r="7" fill="none" stroke="#101058"/><path d="M13 13l7 8" stroke="#101058" stroke-width="4"/><path d="M13 13l6 6" stroke="#50c0e8"/><path d="M5 8h6" stroke="#000" stroke-width="2"/></svg></button>
    <button class="tool" aria-label="Normal view"><svg viewBox="0 0 22 22"><path d="M7 12h14l-6 9H1z" fill="#38b8c0" stroke="#005058"/><path d="M11 16V5" stroke="#c00000" stroke-dasharray="2 1" stroke-width="2"/><path d="M11 1l-3 6h6z" fill="#ff8" stroke="#22f"/></svg></button>
    <button class="tool" aria-label="Multi view"><svg viewBox="0 0 22 22"><path d="M4 4h16v17H4z" fill="#777"/><path d="M3 2h15v16H3z" fill="#00f8ff" stroke="#00f" stroke-width="1"/><path d="M11 3h6v6h-6z" fill="#d060d8"/><path d="M10 2v16M3 10h15" stroke="#00c"/></svg></button>
    <button class="tool more" aria-label="Isometric view"><svg viewBox="0 0 22 22"><path d="M1 6l5-5h14v14l-5 5H1z" fill="#40e0ff" stroke="#00f"/><path d="M1 6h14v14M15 6l5-5" fill="none" stroke="#00f"/></svg></button>
    <button class="tool more lit" aria-label="Shading with edges"><svg viewBox="0 0 22 22"><path d="M4 4v14l3 3h8l3-3V4l-3-3H7z" fill="#0030ff" stroke="#000" stroke-width="3"/><ellipse cx="11" cy="4" rx="6" ry="2" fill="#50b0ff"/><path d="M6 8v10l3 1V8z" fill="#40c8ff"/><path d="M12 8v11" stroke="#000"/><path d="M4 4v14l3 2h8l3-2V4l-3-3H7zM4 5l3 2h8l3-2" fill="none" stroke="#ff0"/></svg></button>
    <button class="tool" aria-label="Hide or show"><svg viewBox="0 0 22 22"><path d="M3 3h16v17H3z" fill="#40d8f0" stroke="#101050"/><path d="M4 4h14v15H4z" fill="none" stroke="#fff"/><path d="M6 9l4-4h6l-2 5-4 2z" fill="#ff8" stroke="#777"/><path d="M5 16l3-4 5-1 2 3-4 4H7z" fill="#fff" stroke="#000"/><path d="M10 13l4 1-3 4z" fill="#108080"/></svg></button>
    <button class="tool" aria-label="Swap visible space"><svg viewBox="0 0 22 22"><path d="M3 3h16v17H3z" fill="#40e0ff" stroke="#101050"/><path d="M4 4h14v15H4z" fill="none" stroke="#fff"/><path d="M5 16l3-4 5-1 2 3-4 4H7z" fill="#fff" stroke="#000"/><path d="M10 13l4 1-3 4z" fill="#108080"/></svg></button>
  </div>
  <i class="grip"></i>
  <div class="group broad">
    <button class="tool" aria-label="Generative assembly"><svg viewBox="0 0 22 22"><path d="M0 3l22 8L0 21z" fill="#90c8bc"/><use href="#gear" x="0" y="7" width="13" height="14"/><use href="#gear" x="9" y="2" width="13" height="13"/></svg></button>
    <button class="tool" aria-label="Part design"><svg viewBox="0 0 22 22"><path d="M0 3l22 8L0 21z" fill="#90c8bc"/><use href="#gear" x="1" y="0" width="20" height="18"/></svg></button>
    <button class="tool" aria-label="Product structure"><svg viewBox="0 0 22 22"><path d="M1 1h20v20H1z" fill="#5c5cae"/><path d="M1 1h10v20H1z" fill="#102080"/><use href="#gear" x="0" y="5" width="9" height="9"/><use href="#gear" x="4" y="0" width="10" height="10"/><path d="M9 11v10M9 12h6M9 19h6" stroke="#ff0" fill="none"/><path d="M14 9h5v4h-5zM14 16h5v4h-5z" fill="#ff0"/></svg></button>
    <button class="tool" aria-label="Assembly design"><svg viewBox="0 0 22 22"><path d="M1 2h20v19H1z" fill="#5c5cae"/><path d="M1 2h11v19H1z" fill="#083078"/><path d="M4 3h5v5H4zM17 3h4v5h-4zM1 14h4v5H1zM12 14h4v5h-4z" fill="#ffe8b8" stroke="#111"/></svg></button>
    <button class="tool" aria-label="Sketcher"><svg viewBox="0 0 22 22"><path d="M0 3l22 8L0 21z" fill="#90c8bc"/><path d="M10 3l2 5 5-2-2 5 5 2-6 1-1 6-3-5-6 2 3-5-4-3 6-1z" fill="#ddd" stroke="#333"/><path d="M14 2L9 20" stroke="#111" stroke-width="2"/></svg></button>
    <button class="tool big" aria-label="Harness assembly"><svg><use href="#assembly"/></svg></button>
    <button class="tool big" aria-label="Harness design"><svg><use href="#harness"/></svg></button>
    <button class="tool big" aria-label="Harness flattening"><svg><use href="#harness"/></svg></button>
    <button class="tool big" aria-label="Electrical library"><svg><use href="#assembly"/></svg></button>
  </div>
  <i class="grip"></i>
  <div class="group">
    <button class="tool off" disabled aria-label="Break"><svg viewBox="0 0 22 22"><path d="M10 1v20M1 8h6l-3 9H1M21 5h-5l-4 5 8-2M12 12l3 5h6" fill="none"/></svg></button>
    <button class="tool off" disabled aria-label="Skip forward"><svg viewBox="0 0 22 22"><path d="M3 4l7 7-7 7M9 4l7 7-7 7M19 3v16" fill="none"/></svg></button>
    <button class="tool off" disabled aria-label="Rule list"><svg><use href="#gearlist"/></svg></button>
    <button class="tool off" disabled aria-label="Check list"><svg><use href="#gearlist"/></svg></button>
  </div>
  <i class="grip"></i>
  <button class="tool" aria-label="Capture"><svg viewBox="0 0 22 22"><path d="M1 5h20v12H1z" fill="#222" stroke="#000"/><path d="M1 5h20v3H1z" fill="#aaa" stroke="#181860"/><path d="M9 3h4v2H9z" fill="#ff0" stroke="#000"/><circle cx="11" cy="13" r="5" fill="#fff" stroke="#101040"/><circle cx="11" cy="13" r="3" fill="#111"/><path d="M3 9v7" stroke="#ff8" stroke-dasharray="1 1"/></svg></button>
  <i class="grip"></i>
  <button class="tool" aria-label="Apply material"><svg viewBox="0 0 22 22"><circle cx="3" cy="4" r="3" fill="#20b8c8" stroke="#103050"/><path d="M8 2h6l3 3v3" fill="none" stroke="#00f" stroke-dasharray="2 1" stroke-width="2"/><path d="M13 6h7l-3 5z" fill="#00f"/><path d="M2 14l4-3h14v7l-4 3H2zM2 14h13l5-3M15 14v7M6 11v7h14" fill="none" stroke="#000"/></svg></button>
  <svg class="brand" viewBox="0 0 84 62" role="img" aria-label="CATIA"><path d="M16 2h18q0 10-17 18" fill="none" stroke="#e8232a" stroke-width="4"/><path d="M7 25h11q8 0 4 10T2 44L13 28" fill="none" stroke="#42288c" stroke-width="4"/><path d="M48 17q-17-2-15 6t10 11-18 6" fill="none" stroke="#f59b00" stroke-width="4"/><text x="14" y="59">CATIA</text></svg>
</footer>
</body>
</html>
```
FILE: styles.css
```css
* { box-sizing: border-box; }
body {
  margin: 0;
  min-height: 100vh;
  display: flex;
  flex-direction: column;
  background: #cfcfe6;
  color: #000;
  font: 29px/36px "Open Sans", "Noto Sans", sans-serif;
  overflow: hidden;
}
button, select { font: inherit; color: inherit; border: 0; padding: 0; margin: 0; background: none; }
.defs { position: absolute; width: 0; height: 0; }

/* title bar */
.titlebar { display: flex; align-items: center; height: 46px; padding-left: 4px; background: linear-gradient(90deg, #f3f3f9, #eff3fc 50%, #f3f3f9); }
.app-icon { width: 28px; height: 28px; }
.titlebar h1 { margin: 2px 0 0 11px; font-size: 29px; font-weight: 400; line-height: 36px; }
.window-buttons { display: flex; margin-left: auto; padding-right: 2px; }
.window-buttons button { width: 92px; height: 46px; display: grid; place-items: center; }
.window-buttons svg { width: 20px; height: 20px; fill: none; stroke: #000; stroke-width: 2; overflow: visible; }

/* menu bar */
.menubar { display: flex; height: 44px; background: #cfcfe6; }
.doc-icon { width: 42px; height: 44px; padding: 3px 2px 3px 0; background: #fff; }
.menubar > button { padding: 0 40px 0 16px; }
.menubar > .tight { padding-right: 16px; }
.menubar > .active { background: #ffe5b8; }
.menubar u { text-underline-offset: 4px; text-decoration-thickness: 2px; }
.doc-buttons { display: flex; gap: 3px; margin-left: auto; padding: 2px 2px 1px 0; }
.doc-buttons button { width: 35px; display: grid; place-items: center; background: #fff; border: 2px solid #e4e4e4; }
.doc-buttons svg { width: 16px; height: 16px; fill: none; stroke: #74869a; }

/* toolbars */
.toolbar { display: flex; background: linear-gradient(#fff, #f4f4fa 12%, #d2d2e8 32%, #cdcde4 70%, #b2b2c8 86%, #9797ab); }
.toolbar.top { height: 74px; border-top: 2px solid #efefef; border-bottom: 2px solid #464650; padding-left: 12px; }
.toolbar.bottom { height: 75px; border-top: 2px solid #e2e2e2; border-bottom: 2px solid #55555c; padding: 6px 0 0 8px; align-items: center; }
.grip { flex: none; width: 6px; height: 33px; border-left: 4px solid #fff; border-right: 2px solid #a0a0a0; }
.top .grip { margin-top: 6px; }
.bottom .grip { margin: 0 12px 24px 20px; }
.bottom .grip:first-child { margin-left: 0; }
.combos { display: flex; gap: 5px; margin: 12px 2px 0 16px; align-items: flex-start; }
.combo { display: block; width: 153px; height: 56px; background: #fff; border: 2px solid #8a8a8a; border-bottom-width: 0; border-left-color: #a8a8a8; position: relative; }
.combo.flat { border-color: #c4c4cc; border-bottom-width: 2px; }
.combo.small { width: 96px; }
.combo.off { border-color: #c8c8d0; color: #777; }
.combo.off select { background-color: #f1f1f1; opacity: .7; }
.combo select {
  appearance: none; width: 100%; height: 100%; padding: 0 0 0 7px; border-radius: 0; opacity: 1;
  background: #fff url("data:image/svg+xml,%3Csvg xmlns='http://www.w3.org/2000/svg' viewBox='0 0 16 10'%3E%3Cpath d='M1 1l7 8 7-8' fill='none' stroke='%23555' stroke-width='2'/%3E%3C/svg%3E") no-repeat right 7px center / 16px 10px;
}
.combo:last-child select { padding-left: 3px; }
.combo.swatch::before { content: ""; position: absolute; left: 10px; top: 6px; width: 90px; height: 43px; border: 2px solid #f1f1f1; border-top: 4px solid #808080; border-left-color: #666; }
.tool { position: relative; flex: none; width: 56px; height: 56px; display: grid; place-items: center; }
.tool > svg { width: 44px; height: 44px; overflow: visible; shape-rendering: crispEdges; filter: drop-shadow(4px 5px 0 rgba(190, 190, 190, .5)); }
.tool.big > svg { width: 50px; height: 50px; filter: none; }
.tool.off > svg { stroke: #a0a0a0; fill: #a0a0a0; filter: drop-shadow(2px 2px 0 #fff); }
.solid { fill: #a0a0a0; stroke: none; }
.tool.narrow { width: 44px; }
.tool.more::after { content: ""; position: absolute; right: -5px; bottom: -2px; border: 7px solid transparent; border-top: 11px solid #000; border-bottom: 0; }
.tool.lit::before { content: ""; position: absolute; right: -7px; bottom: -4px; width: 18px; height: 17px; background: #fff; }
.top .tool { margin-top: 8px; }
.right-tools { display: flex; margin-left: auto; padding-right: 252px; }
.right-tools .grip { margin-right: 12px; }
.group { display: flex; }
.group .more { margin-right: 4px; }
.broad .tool { width: 60px; }
.glyph { font-family: "Liberation Serif", serif; stroke: none; }
.fx { font-size: 14px; font-style: italic; font-weight: 700; }
.help { font: 700 19px/22px "Liberation Sans", sans-serif; fill: #181868; }
.brand { width: 84px; height: 62px; margin-left: 20px; margin-bottom: 4px; }
.brand text { font: italic 700 21px "Liberation Sans", sans-serif; fill: #42288c; }

/* work area */
.work { flex: 1; display: flex; min-height: 0; }
.viewport {
  flex: 1; min-width: 0; border: solid #62626c; border-width: 4px 0 0 4px; border-top-color: #76767e; border-left-color: #8c8c90;
  background: linear-gradient(#333364, #403f6e 33%, #464572 66%, #65648c 77%, #8381a2 87%, #acacc4);
}
.scene { display: block; width: 100%; height: 100%; }
.sidebar {
  flex: none; width: 75px; display: flex; flex-direction: column; align-items: center; padding: 12px 0 0 6px; border-left: 3px solid #e4e4e4;
  background: linear-gradient(90deg, #fff 5px, #e8e8f5 12px, #cfcfe6 24px, #cdcde4 55px, #a2a2b6);
}
.sidebar .bar { flex: none; width: 34px; height: 5px; margin: 18px auto 13px 0; border-top: 3px solid #fff; border-bottom: 2px solid #a0a0a0; }
.sidebar .bar:first-child { margin-top: 0; }
.stack { display: grid; gap: 2px; }
.sidebar .more::after { right: -3px; bottom: 2px; border-top-width: 7px; }

/* scene parts */
.clip .k { fill: #000; }
.clip .b { fill: #0000ff; stroke: #000080; }
.clip .r { fill: none; stroke: #0000c0; stroke-width: 2; }
.clip .g { fill: #00a000; }
.tube { fill: none; stroke-linejoin: round; }
.tube .o { stroke: #000; }
.tube .d { stroke: #005cb4; }
.tube .m { stroke: #0098ff; filter: url(#soft); }
.tube .h { stroke: #28c0ff; stroke-width: 5; filter: url(#glow); }
.bright .h { stroke: #5cf0ff; stroke-width: 6; }
.w18 .d { stroke-width: 17; }
.w18 .m { stroke-width: 11; }
.w24 .o { stroke-width: 27; }
.w24 .d { stroke-width: 24; }
.w24 .m { stroke-width: 20; }
.w28 .d { stroke-width: 27; }
.w28 .m { stroke-width: 23; }
.w34 .o { stroke-width: 38; }
.w34 .d { stroke-width: 35; }
.w34 .m { stroke-width: 24; }
.w46 .d { stroke-width: 48; stroke: #0078e0; }
.w46 .m { stroke-width: 38; }
.w46 .h { stroke-width: 9; }
.line { fill: none; stroke: #000; stroke-width: 3; }
.axis { font: 26px "Liberation Mono", monospace; fill: #fff; }
.axis.yellow { fill: #ffee00; }
.cracks { fill: none; stroke: #b8b7d0; stroke-width: 2; opacity: .5; }
```
